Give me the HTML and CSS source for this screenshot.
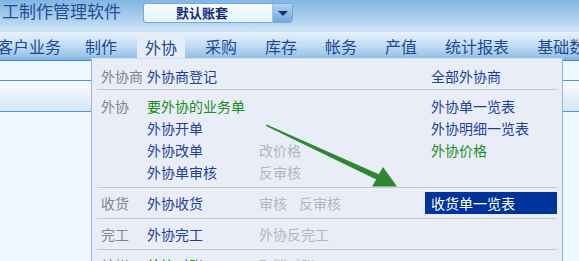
FILE: index.html
```html
<html>
<head>
    <meta charset="utf-8">
    <link rel="stylesheet" href="styles.css">
</head>
<body>
    <div class="top-bar">
        <div class="app-title">工制作管理软件</div>
        <div class="acct-box">
            <span class="acct-name">默认账套</span>
            <span class="acct-btn"><i></i></span>
        </div>
    </div>

    <div class="nav-bar">
        <div class="nav-item first">客户业务</div>
        <div class="nav-item">制作</div>
        <div class="nav-item active">外协</div>
        <div class="nav-item">采购</div>
        <div class="nav-item">库存</div>
        <div class="nav-item">帐务</div>
        <div class="nav-item">产值</div>
        <div class="nav-item">统计报表</div>
        <div class="nav-item">基础数据</div>
    </div>

    <div class="work-area">
        <div class="work-band"></div>
    </div>

    <div class="drop-menu">
        <div class="grp grp-first">
            <div class="lbl">外协商</div>
            <div class="col"><span class="ln blue">外协商登记</span></div>
            <div class="col"></div>
            <div class="col"><span class="ln blue">全部外协商</span></div>
        </div>
        <div class="grp grp-main">
            <div class="lbl">外协</div>
            <div class="col">
                <span class="ln green">要外协的业务单</span>
                <span class="ln blue">外协开单</span>
                <span class="ln blue">外协改单</span>
                <span class="ln blue">外协单审核</span>
            </div>
            <div class="col">
                <span class="ln"></span>
                <span class="ln"></span>
                <span class="ln grey">改价格</span>
                <span class="ln grey">反审核</span>
            </div>
            <div class="col">
                <span class="ln blue">外协单一览表</span>
                <span class="ln blue">外协明细一览表</span>
                <span class="ln green">外协价格</span>
            </div>
        </div>
        <div class="grp">
            <div class="lbl">收货</div>
            <div class="col"><span class="ln blue">外协收货</span></div>
            <div class="col"><span class="ln grey">审核<span class="gap"></span>反审核</span></div>
            <div class="col"><span class="ln sel">收货单一览表</span></div>
        </div>
        <div class="grp">
            <div class="lbl">完工</div>
            <div class="col"><span class="ln blue">外协完工</span></div>
            <div class="col"><span class="ln grey">外协反完工</span></div>
            <div class="col"></div>
        </div>
        <div class="grp">
            <div class="lbl">结帐</div>
            <div class="col"><span class="ln green">外协对账</span></div>
            <div class="col"><span class="ln grey">取消对账</span></div>
            <div class="col"></div>
        </div>
    </div>

    <svg class="hint-arrow" width="579" height="261" viewBox="0 0 579 261">
        <polygon points="266,124.3 378.8,174.2 383,167 397,186.5 372,186.5 376.2,179.6 266.6,126.2" fill="#2e8730"/>
    </svg>
</body>
</html>
```

FILE: styles.css
```css
:root {
    --menu-bg: #e8edf7;
    --link-fg: #1f3f9c;
    --nav-fg: #1d4a92;
    --def-fn: "Noto Sans CJK SC", "Noto Sans", sans-serif;
}

* {
    box-sizing: border-box;
    margin: 0px;
    padding: 0px;
    font-family: var(--def-fn);
}

body {
    width: 579px;
    height: 261px;
    overflow: hidden;
    position: relative;
    background-color: #eef9ff;
}

/* header */

.top-bar {
    height: 31px;
    display: flex;
    align-items: flex-start;
    background: linear-gradient(#82b6e3, #b3d4f0 70%, #d2e6f7);
    white-space: nowrap;
}

.app-title {
    font-size: 17px;
    line-height: 22px;
    padding-left: 2px;
    color: #1e5196;
    width: 143px;
}

.acct-box {
    margin-top: 3px;
    width: 150px;
    height: 20px;
    display: flex;
    border: 1px solid #7ba7d6;
    border-radius: 3px;
    background: linear-gradient(#f6fcff, #e2f3fd);
    overflow: hidden;
}

.acct-name {
    flex: 1;
    text-align: center;
    padding-right: 12px;
    font-size: 13px;
    line-height: 18px;
    font-weight: bold;
    color: #14287a;
}

.acct-btn {
    width: 20px;
    display: flex;
    align-items: center;
    justify-content: center;
    background: linear-gradient(#b2d3f0, #74a9dc);
    border-left: 1px solid #9cc2e8;
}

.acct-btn i {
    width: 0px;
    height: 0px;
    border-left: 5px solid transparent;
    border-right: 5px solid transparent;
    border-top: 5px solid #152f7c;
}

/* navigation */

.nav-bar {
    height: 30px;
    display: flex;
    gap: 12px;
    background: linear-gradient(#e6f1fb, #c4def5 45%, #9cc6ea 85%, #7cb2e0);
    border-top: 1px solid #c9e0f5;
    border-bottom: 1px solid #3d87cf;
    white-space: nowrap;
}

.nav-item {
    padding: 0px 8px;
    font-size: 16px;
    line-height: 28px;
    color: var(--nav-fg);
}

.nav-item.first {
    margin-left: -11px;
    margin-right: -4px;
}

.nav-item.active {
    margin-top: 1px;
    background: linear-gradient(#e4edf8, var(--menu-bg));
}

/* page behind the menu */

.work-area {
    padding-top: 19px;
}

.work-band {
    height: 32px;
    border-top: 1px solid #4f96d7;
    border-bottom: 1px solid #4f96d7;
    background: linear-gradient(#fbfdff, #d6e6f6);
}

/* drop down menu */

.drop-menu {
    position: absolute;
    left: 91px;
    top: 58px;
    width: 472px;
    height: 220px;
    background-color: var(--menu-bg);
    border-left: 1px solid #95b6e2;
    border-right: 1px solid #8cb6e6;
    border-top: 1px solid #d6e2f1;
}

.grp {
    margin: 0px 5px 0px 5px;
    padding: 4px 0px 4px 4px;
    display: grid;
    grid-template-columns: 46px 112px 172px 1fr;
    border-top: 1px solid #c8c8cc;
    font-size: 14px;
    line-height: 22px;
}

.grp-first {
    border-top: none;
    padding-top: 6px;
    padding-bottom: 2px;
}

.grp-main {
    padding-top: 5px;
}

.col {
    display: flex;
    flex-direction: column;
}

.ln {
    display: block;
    height: 22px;
    white-space: nowrap;
}

.lbl {
    color: #858585;
}

.blue {
    color: var(--link-fg);
}

.green {
    color: #1b8e1b;
}

.grey {
    color: #b6b6b8;
}

.gap {
    display: inline-block;
    width: 12px;
}

.sel {
    margin-left: -6px;
    padding-left: 6px;
    background-color: #003399;
    color: #ffffff;
}

.hint-arrow {
    position: absolute;
    left: 0px;
    top: 0px;
}
```
